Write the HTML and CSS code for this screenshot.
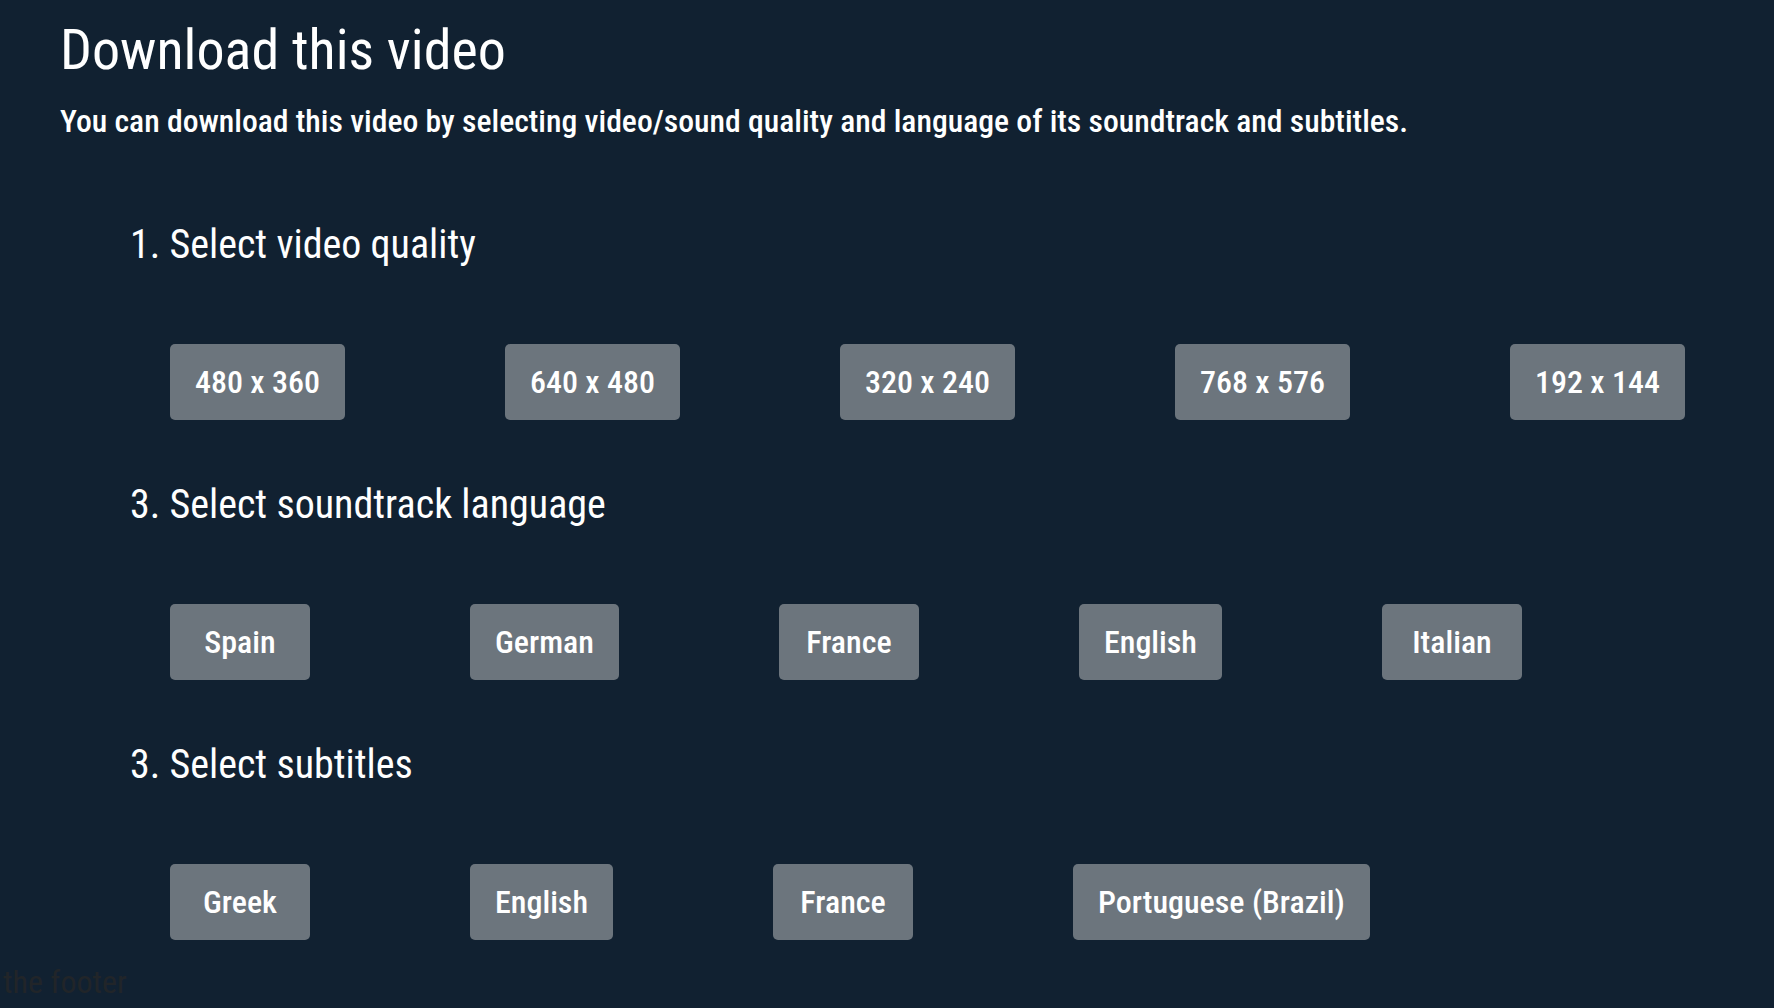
FILE: index.html
```html
<!DOCTYPE html>
<html lang="en">
<head>
<meta charset="utf-8">
<title>Download this video</title>
<link rel="stylesheet" href="styles.css">
</head>
<body>
<main class="page">
  <h1 class="title">Download this video</h1>
  <p class="lead">You can download this video by selecting video/sound quality and language of its soundtrack and subtitles.</p>

  <section class="step">
    <h3 class="step-title">1. Select video quality</h3>
    <div class="options">
      <button class="opt">480 x 360</button>
      <button class="opt">640 x 480</button>
      <button class="opt">320 x 240</button>
      <button class="opt">768 x 576</button>
      <button class="opt">192 x 144</button>
    </div>
  </section>

  <section class="step">
    <h3 class="step-title">3. Select soundtrack language</h3>
    <div class="options">
      <button class="opt">Spain</button>
      <button class="opt">German</button>
      <button class="opt">France</button>
      <button class="opt">English</button>
      <button class="opt">Italian</button>
    </div>
  </section>

  <section class="step step-last">
    <h3 class="step-title">3. Select subtitles</h3>
    <div class="options">
      <button class="opt">Greek</button>
      <button class="opt">English</button>
      <button class="opt">France</button>
      <button class="opt">Portuguese (Brazil)</button>
    </div>
  </section>
</main>
<footer class="footer">the footer</footer>
</body>
</html>
```

FILE: styles.css
```css
html, body {
  margin: 0;
  padding: 0;
  background: #112131;
}

body {
  font-family: "Roboto Condensed", Roboto, "Liberation Sans", sans-serif;
  font-stretch: condensed;
  color: #ffffff;
  min-height: 1008px;
}

.page {
  padding: 17px 0 0 60px;
}

.title {
  margin: 0 0 15px 0;
  font-size: 56px;
  font-weight: 400;
  line-height: 66px;
}

.lead {
  margin: 0 0 73px 0;
  font-size: 31.7px;
  font-weight: 500;
  line-height: 48px;
}

.step {
  margin: 0 0 59px 70px;
}

.step-last {
  margin-bottom: 0;
}

.step-title {
  margin: 0 0 73px 0;
  font-size: 40px;
  font-weight: 400;
  line-height: 52px;
}

.options {
  display: flex;
  gap: 160px;
  padding-left: 40px;
}

.opt {
  font-family: inherit;
  font-stretch: condensed;
  min-width: 140px;
  height: 76px;
  padding: 0 25px;
  border: 0;
  border-radius: 5px;
  background: #6c757d;
  color: #ffffff;
  font-size: 32px;
  font-weight: 500;
  line-height: 76px;
}

.footer {
  margin-top: 22px;
  padding-left: 3px;
  color: #212529;
  font-size: 32px;
  line-height: 40px;
}
```
